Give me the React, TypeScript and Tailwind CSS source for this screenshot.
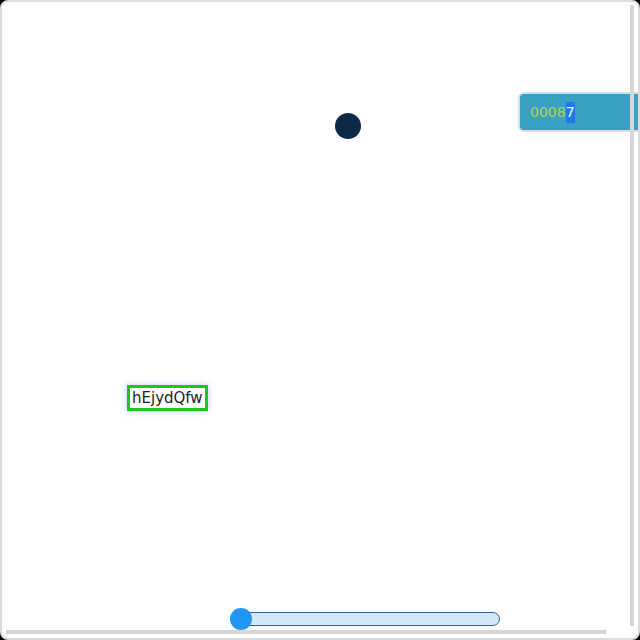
export default function App() {
  return (
    <div className="h-[640px] w-[640px] bg-black">
      <div className="relative h-full w-full overflow-hidden rounded-[8px] border-2 border-[#dcdcdc] bg-white font-['DejaVu_Sans',sans-serif]">
        {/* dot */}
        <div className="absolute left-[333px] top-[111px] h-[26px] w-[26px] rounded-full bg-[#0c2a47]" />

        {/* counter badge */}
        <div className="absolute left-[516px] top-[90px] flex h-[40px] w-[140px] items-center rounded-[6px] border-2 border-[#dcdcdc] bg-[#38a2c4] pl-[10px] text-[14px]">
          <span className="text-[#b9cf4a]">0008</span>
          <span className="bg-[#1e7ae6] text-white">7</span>
        </div>

        {/* label */}
        <div className="absolute left-[125px] top-[383px] flex h-[26px] items-center border-[3px] border-[#1ec71e] bg-white px-[2px] text-[15px] leading-none text-[#222] shadow-[0_0_6px_rgba(120,150,220,0.5)]">
          hEjydQfw
        </div>

        {/* slider */}
        <div className="absolute left-[228px] top-[606px] flex h-[22px] w-[270px] items-center">
          <div className="ml-[4px] h-[14px] w-full rounded-full border border-[#3c5a9c] bg-[#d3e8fa]" />
          <div className="absolute left-0 top-0 h-[22px] w-[22px] rounded-full bg-[#2196f3]" />
        </div>

        {/* scrollbars */}
        <div className="absolute left-[628px] top-[3px] h-[621px] w-[4px] bg-[#d6d6d6]" />
        <div className="absolute left-[4px] top-[628px] h-[4px] w-[600px] bg-[#d6d6d6]" />
      </div>
    </div>
  )
}
